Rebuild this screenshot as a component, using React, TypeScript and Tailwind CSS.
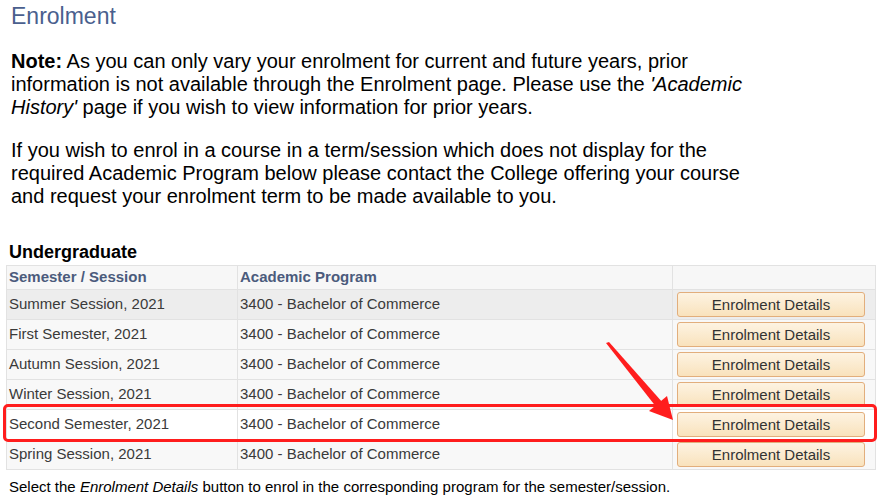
import React from "react"

const rows = [
  { term: "Summer Session, 2021", bg: "bg-[#ededed]" },
  { term: "First Semester, 2021", bg: "bg-[#f8f8f8]" },
  { term: "Autumn Session, 2021", bg: "bg-[#f8f8f8]" },
  { term: "Winter Session, 2021", bg: "bg-[#f8f8f8]" },
  { term: "Second Semester, 2021", bg: "bg-white" },
  { term: "Spring Session, 2021", bg: "bg-[#f8f8f8]" },
]

function DetailsButton() {
  return (
    <button className="w-[188px] h-[25px] rounded-[3px] border border-[#e2ae7c] bg-gradient-to-b from-[#fdf3e2] to-[#f9e2bc] text-[15px] text-[#333] leading-none">
      Enrolment Details
    </button>
  )
}

export default function App() {
  return (
    <div className="relative w-[886px] h-[497px] bg-white font-['Liberation_Sans',Arial,sans-serif] overflow-hidden">
      <h1 className="pl-[11px] pt-[3px] text-[23px] leading-[27px] text-[#4a5f8e]">Enrolment</h1>

      <div className="pl-[11px] w-[760px] text-[20px] leading-[23px] text-black mt-[20px]">
        <p>
          <b>Note:</b> As you can only vary your enrolment for current and future years, prior information is not
          available through the Enrolment page. Please use the <i>'Academic History'</i> page if you wish to view
          information for prior years.
        </p>
        <p className="mt-[20px]">
          If you wish to enrol in a course in a term/session which does not display for the required Academic Program
          below please contact the College offering your course and request your enrolment term to be made available
          to you.
        </p>
      </div>

      <h2 className="pl-[9px] mt-[34px] text-[18px] leading-[21px] font-bold text-black">Undergraduate</h2>

      <table className="ml-[6px] mt-[2px] w-[870px] border-collapse border border-[#cfcfcf] text-[15px] text-[#3a3a3a]">
        <thead>
          <tr className="bg-[#f7f7f7] h-[24px] text-left text-[#4b5b7c]">
            <th className="w-[231px] pl-[2px] font-bold border border-[#e2e2e2]">Semester / Session</th>
            <th className="w-[435px] pl-[2px] font-bold border border-[#e2e2e2]">Academic Program</th>
            <th className="border border-[#e2e2e2]"></th>
          </tr>
        </thead>
        <tbody>
          {rows.map((r) => (
            <tr key={r.term} className={`${r.bg} h-[30px]`}>
              <td className="pl-[2px] border border-[#e2e2e2]">{r.term}</td>
              <td className="pl-[2px] border border-[#e2e2e2]">3400 - Bachelor of Commerce</td>
              <td className="pl-[4px] border border-[#e2e2e2]">
                <DetailsButton />
              </td>
            </tr>
          ))}
        </tbody>
      </table>

      <p className="pl-[9px] mt-[8px] text-[15px] leading-[17px] text-black">
        Select the <i>Enrolment Details</i> button to enrol in the corresponding program for the semester/session.
      </p>

      {/* annotation overlay */}
      <div className="absolute left-[3px] top-[404px] w-[874px] h-[38px] rounded-[5px] border-[3px] border-[#ff1d1d]" />
      <svg className="absolute left-0 top-0" width="886" height="497">
        <polygon points="606,343 609,342 663,403 657,408" fill="#ff1d1d" />
        <polygon points="673,420 649,411 667,396" fill="#ff1d1d" />
      </svg>
    </div>
  )
}
